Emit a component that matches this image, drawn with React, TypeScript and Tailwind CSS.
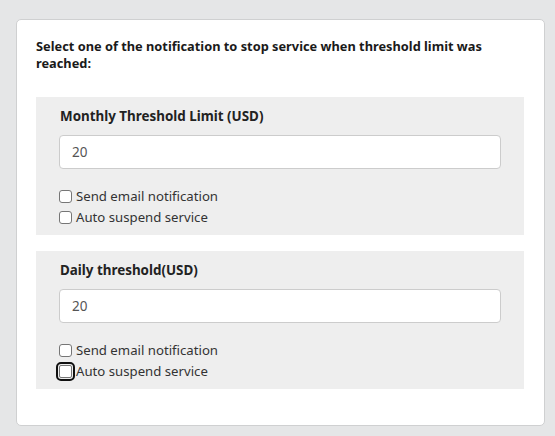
import React from "react";

const Section = ({ title, value, focusLast }: { title: string; value: string; focusLast?: boolean }) => {
  return (
    <div className="bg-[#eeeeee] pl-[23px] pr-[23px] pt-[9px] pb-[7px]">
      <div className="text-[13.4px] font-bold leading-[20px] text-[#222] pl-[1px]">{title}</div>
      <div className="mt-[9px] h-[34px] rounded-[4px] border border-[#cccccc] bg-white flex items-center px-[12px] text-[13.5px] text-[#555]">
        {value}
      </div>
      <div className="mt-[17px] flex flex-col">
        <label className="flex items-center h-[21px] text-[13.2px] text-[#333]">
          <span className="w-[13px] h-[13px] rounded-[3px] border border-[#767676] bg-white mr-[4px]" />
          Send email notification
        </label>
        <label className="flex items-center h-[21px] text-[13.2px] text-[#333]">
          {focusLast ? (
            <span className="w-[13px] h-[13px] rounded-[2px] border border-[#767676] bg-white mr-[4px] outline outline-2 outline-[#101010] outline-offset-[1px]" />
          ) : (
            <span className="w-[13px] h-[13px] rounded-[3px] border border-[#767676] bg-white mr-[4px]" />
          )}
          Auto suspend service
        </label>
      </div>
    </div>
  );
};

export default function App() {
  return (
    <div
      className="w-[555px] h-[436px] bg-[#e5e6e7] pt-[19px] pl-[16px]"
      style={{ fontFamily: '"Noto Sans", "Open Sans", sans-serif' }}
    >
      <div className="w-[529px] h-[407px] bg-white border border-[#cfd0d1] rounded-[5px] pl-[19px] pr-[20px] pt-[18px]">
        <p className="text-[12.8px] font-bold leading-[17px] text-[#1a1a1a]">
          Select one of the notification to stop service when threshold limit was reached:
        </p>
        <div className="mt-[25px] flex flex-col gap-[16px]">
          <Section title="Monthly Threshold Limit (USD)" value="20" />
          <Section title="Daily threshold(USD)" value="20" focusLast />
        </div>
      </div>
    </div>
  );
}
